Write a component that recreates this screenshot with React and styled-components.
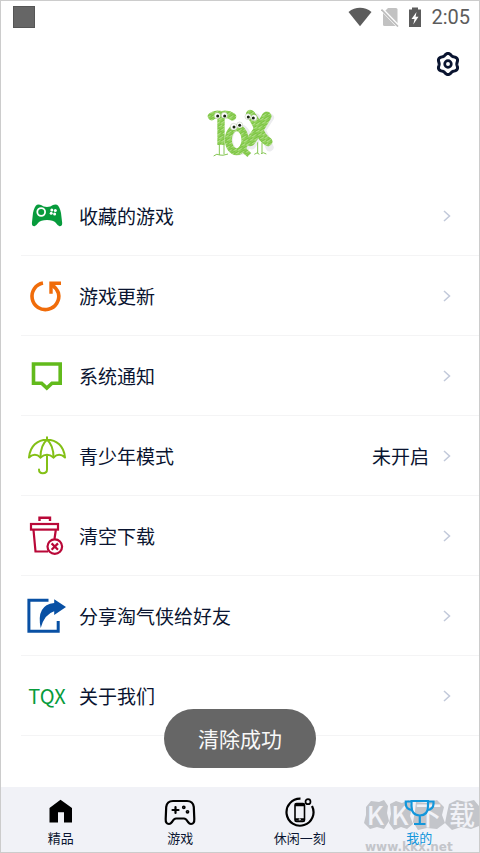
import React from "react";
import styled, { createGlobalStyle } from "styled-components";

const GlobalStyle = createGlobalStyle`
  * {
    box-sizing: border-box;
  }
  body {
    margin: 0;
    background: #ffffff;
    font-family: "Noto Sans CJK SC", "Noto Sans", sans-serif;
    color: #0a1430;
  }
`;

const Page = styled.div`
  display: flex;
  flex-direction: column;
  min-height: 100vh;
  border: 1px solid #cccccc;
  background: #ffffff;
`;

// Status bar
const StatusBar = styled.div`
  display: flex;
  align-items: center;
  justify-content: space-between;
  height: 32px;
  padding: 0 9px 0 12px;
  color: #5c5c5c;
`;
const AppSquare = styled.div`
  width: 22px;
  height: 22px;
  background: #666666;
  border: 1px solid #555555;
`;
const StatusIcons = styled.div`
  display: flex;
  align-items: center;
  gap: 9px;
`;
const Clock = styled.span`
  font-family: Roboto, sans-serif;
  font-size: 20px;
  line-height: 24px;
`;

const Toolbar = styled.header`
  display: flex;
  justify-content: flex-end;
  padding: 19px 19px 4px;
`;
const IconButton = styled.button`
  display: flex;
  padding: 0;
  border: none;
  background: none;
  color: #0a1430;
  cursor: pointer;
`;
const LogoArea = styled.div`
  display: flex;
  justify-content: center;
  padding: 20px 0 11px;
`;

// Menu
const Menu = styled.main`
  display: flex;
  flex-direction: column;
  padding-left: 20px;
  margin-bottom: 51px;
`;
const MenuRow = styled.button`
  display: flex;
  align-items: center;
  height: 80px;
  padding: 0 28px 0 6px;
  border: none;
  border-bottom: 1px solid #f4f4f5;
  background: none;
  color: inherit;
  font-family: inherit;
  font-size: 19px;
  line-height: 28px;
  text-align: left;
  cursor: pointer;
`;
const IconSlot = styled.span`
  display: flex;
  align-items: center;
  justify-content: center;
  width: 40px;
  height: 40px;
  margin-right: 12px;
  color: ${(props) => props.$color};
`;
const IconText = styled.span`
  font-size: 20px;
`;
const RowLabel = styled.span`
  flex: 1;
`;
const RowValue = styled.span`
  margin-right: 14px;
`;

const Toast = styled.div`
  position: fixed;
  left: 50%;
  bottom: 85px;
  transform: translateX(-50%);
  padding: 14px 34px 15px;
  border-radius: 30px;
  background: #666666;
  color: #f8f8f8;
  font-size: 21px;
  line-height: 30px;
  white-space: nowrap;
`;

// Bottom tabs
const TabBar = styled.nav`
  position: relative;
  display: flex;
  height: 65px;
  margin-top: auto;
  background: #f1f2f7;
`;
const Tab = styled.a`
  position: relative;
  flex: 1;
  display: flex;
  flex-direction: column;
  align-items: center;
  gap: 1px;
  padding-top: 10px;
  color: ${(props) => (props.$active ? "#1296db" : "#000000")};
  text-decoration: none;
`;
const TabLabel = styled.span`
  font-size: 13px;
  line-height: 20px;
  color: ${(props) => (props.$active ? "#1296db" : "#0a1430")};
`;

// Site stamp in the corner, under the last tab
const Stamp = styled.div`
  position: absolute;
  right: 0;
  bottom: 0;
  width: 116px;
  height: 54px;
`;
const StampShape = styled.svg`
  position: absolute;
  left: 0;
  top: 0;
`;
const StampTitle = styled.div`
  position: absolute;
  left: 0;
  top: 0;
  display: grid;
  grid-template-columns: 25px 24px 33px 34px;
  justify-items: center;
  font-size: 26px;
  line-height: 32px;
  font-weight: 500;
  color: #f1f2f7;
`;
const StampUrl = styled.div`
  position: absolute;
  left: 2px;
  bottom: -2px;
  font-family: "DejaVu Sans", sans-serif;
  font-size: 12px;
  line-height: 14px;
  font-weight: bold;
  color: #c3c5ca;
`;

const gearPoints = Array.from({ length: 72 }, (_, i) => {
  const angle = (i * 5 * Math.PI) / 180;
  const radius = 9.7 - 0.9 * Math.cos(6 * angle);
  return `${(12 + radius * Math.cos(angle)).toFixed(2)},${(12 + radius * Math.sin(angle)).toFixed(2)}`;
}).join(" ");

const GearIcon = () => (
  <svg width="24" height="24" viewBox="0 0 24 24" fill="none" stroke="currentColor">
    <polygon points={gearPoints} strokeWidth="3" strokeLinejoin="round" />
    <circle cx="12" cy="12" r="3.300" strokeWidth="2.700" />
  </svg>
);

const WifiIcon = () => (
  <svg width="24" height="20" viewBox="0 0 24 20" fill="currentColor">
    <path d="M.5 5C4 2 8 .8 12 .8S20 2 23.5 5L12 19.2z" />
  </svg>
);

const NoSimIcon = () => (
  <svg width="18" height="20" viewBox="0 0 18 20">
    <path d="M2 6L7 1h8q1.500 0 1.500 1.500V19H3.500Q2 19 2 17.500z" fill="#c2c2c2" />
    <path d="M0 1.500L17.500 19.500" stroke="#ffffff" strokeWidth="3.500" />
    <path d="M.5 2.500L17 19.500" stroke="#bcbcbc" strokeWidth="1.600" />
  </svg>
);

const BatteryIcon = () => (
  <svg width="14" height="20" viewBox="0 0 14 20">
    <path d="M1 2.500h3V.5h6v2h3V20H1z" fill="#5c5c5c" />
    <path d="M8.500 5L3.500 12H6.500L5.300 17.500L10.500 9.800H7.600z" fill="#ffffff" />
  </svg>
);

const ChevronIcon = () => (
  <svg width="8" height="12" viewBox="0 0 8 12" fill="none" stroke="#c2c9da" strokeWidth="1.500">
    <path d="M1 1L6.500 6L1 11" />
  </svg>
);

const TqxLogo = () => (
  <svg width="90" height="65" viewBox="0 0 270 195" role="img" aria-label="TQX">
    <defs>
      <pattern id="crayon" width="29" height="12" patternUnits="userSpaceOnUse" patternTransform="rotate(-32)">
        <rect width="29" height="12" fill="#90d159" />
        <path d="M0 2H20M8 8H29" stroke="#72bd38" strokeWidth="2.500" />
        <path d="M0 5H14M17 11H29" stroke="#d3efba" strokeWidth="1.800" />
      </pattern>
    </defs>
    <g fill="none" stroke="#ececef" strokeLinecap="round" transform="translate(6 4)">
      <path d="M178 48L218 138M219 49L165 132" strokeWidth="24" />
      <ellipse cx="127" cy="115" rx="28" ry="38" strokeWidth="18" />
    </g>
    <g fill="none" stroke="url(#crayon)">
      <path d="M50 49Q62 40 80 45Q98 40 112 50" strokeWidth="23" strokeLinecap="round" />
      <path d="M78 47V135" strokeWidth="22" />
      <ellipse cx="125" cy="119" rx="25" ry="36" strokeWidth="21" />
      <path d="M134 139L163 165" strokeWidth="17" />
      <path d="M166 43Q181 59 191 87T219 125" strokeWidth="27" strokeLinecap="round" />
      <path d="M215 49Q200 77 166 124" strokeWidth="29" strokeLinecap="round" />
    </g>
    <g fill="none" stroke="#85c653" strokeWidth="3">
      <path d="M73 132V165M87 132V163M56 168Q66 159 74 165Q82 168 99 162M188 127V160M201 128V160M178 163Q187 154 193 163M198 161Q205 155 214 162" />
    </g>
    <g fill="#ffffff" stroke="#9cab8d" strokeWidth="1">
      <circle cx="67" cy="47" r="9" />
      <circle cx="88" cy="46" r="9" />
      <circle cx="116" cy="80" r="10" />
      <circle cx="134" cy="75" r="9" />
      <circle cx="159" cy="50" r="9" />
      <circle cx="177" cy="53" r="9" />
    </g>
    <g fill="#17230f">
      <circle cx="68" cy="48" r="4.500" />
      <circle cx="89" cy="48" r="4.500" />
      <circle cx="117" cy="81" r="4.500" />
      <circle cx="134" cy="76" r="4.500" />
      <circle cx="160" cy="51" r="4.500" />
      <circle cx="175" cy="54" r="4.500" />
    </g>
  </svg>
);

const GamepadIcon = () => (
  <svg width="40" height="40" viewBox="0 0 40 40">
    <path d="M10 8.800Q12 8 14 9Q16.500 11 20 11T26 9Q28 8 30 8.800Q32.500 10 34 17L35.200 27Q35.200 30.500 32.500 30.300Q31 30 28.500 26.500Q26.500 24 20 24T11.500 26.500Q9 30 7.500 30.300Q4.800 30.500 4.900 27L6 17Q7.500 10 10 8.800z" fill="currentColor" />
    <circle cx="14.200" cy="16" r="3.900" fill="none" stroke="#ffffff" strokeWidth="1.800" />
    <g fill="#ffffff">
      <circle cx="24.800" cy="14" r="1.500" />
      <circle cx="28.300" cy="14.600" r="1.500" />
      <circle cx="24.200" cy="17.200" r="1.500" />
      <circle cx="27.600" cy="18" r="1.500" />
    </g>
  </svg>
);

const UpdateIcon = () => (
  <svg width="40" height="40" viewBox="0 0 40 40" fill="none" stroke="currentColor">
    <path d="M16 7A13.400 13.400 0 1 0 31.400 17Q29.500 12 25 9" strokeWidth="3.600" />
    <path d="M34 7.300H24V17.800" strokeWidth="3.400" />
  </svg>
);

const NoticeIcon = () => (
  <svg width="40" height="40" viewBox="0 0 40 40" fill="none" stroke="currentColor" strokeWidth="3.600">
    <path d="M6.500 8H33.200V27.200H25L19.800 32L14.600 27.200H6.500z" />
  </svg>
);

const UmbrellaIcon = () => (
  <svg width="40" height="40" viewBox="0 0 40 40" fill="none" stroke="currentColor" strokeWidth="2" strokeLinecap="round" strokeLinejoin="round">
    <path d="M20 1.200V4M2 21.500C3 10 10.500 3.700 20 3.700S37 10 38 21.500Q32 16 26.500 21.500Q20 16 13.500 21.500Q8 16 2 21.500z" />
    <path d="M20 3.700Q13.500 9 13.500 21.500M20 3.700Q26.500 9 26.500 21.500" />
    <path d="M20 20V33.500Q20 37.200 15.800 37.200Q12 37.200 12 33.500" />
  </svg>
);

const TrashIcon = () => (
  <svg width="40" height="40" viewBox="0 0 40 40" fill="none" stroke="currentColor" strokeWidth="2.200">
    <path d="M12.500 5V1.800H23V5" strokeWidth="2.400" />
    <rect x="4" y="8" width="27" height="5.600" />
    <path d="M6.500 14L8.500 35.500H21M28.800 14L27.500 23" />
    <circle cx="27.800" cy="30.600" r="7.300" />
    <path d="M24.600 27.400L31 33.800M31 27.400L24.600 33.800" />
  </svg>
);

const ShareIcon = () => (
  <svg width="40" height="40" viewBox="0 0 40 40">
    <path d="M21.500 4.200H1.900V35.200H31.200V25" fill="none" stroke="currentColor" strokeWidth="3" />
    <path d="M27.200 3.200L39 11L27.200 19V15.200Q17.500 18 13.700 32Q9 9 27.200 7z" fill="currentColor" />
  </svg>
);

const HomeIcon = () => (
  <svg width="30" height="30" viewBox="0 0 30 30" fill="currentColor">
    <path d="M14.500 2.800L26 11V25.600H18V15.300H12V25.600H3.500V11z" />
  </svg>
);

const GamesIcon = () => (
  <svg width="32" height="30" viewBox="0 0 32 30" fill="none" stroke="currentColor" strokeWidth="2.200" strokeLinejoin="round" strokeLinecap="round">
    <path d="M9 4H23Q29 4 29.800 10L30.300 22Q30.500 27 27 27Q25.500 27 24 25Q22 21.500 20 21.500H12Q10 21.500 8 25Q6.500 27 5 27Q1.500 27 1.700 22L2.200 10Q3 4 9 4z" />
    <path d="M11.500 10V16M8.500 13H14.500" />
    <circle cx="19.800" cy="10.300" r="0.800" />
    <circle cx="23.500" cy="14.800" r="0.800" />
  </svg>
);

const RelaxIcon = () => (
  <svg width="30" height="30" viewBox="0 0 30 30" fill="none" stroke="currentColor">
    <path d="M15.500 1.700A13.500 13.500 0 1 0 27 9" strokeWidth="2.200" />
    <circle cx="23" cy="4.700" r="2.500" strokeWidth="1.700" />
    <rect x="10" y="6.500" width="9.500" height="18" rx="1.500" strokeWidth="1.600" />
    <path d="M10 8H19.500M10 22.500H19.500" strokeWidth="2.500" />
    <circle cx="14.800" cy="22.400" r="0.600" stroke="#f1f2f7" />
  </svg>
);

const TrophyIcon = () => (
  <svg width="32" height="30" viewBox="0 0 32 30" fill="none" stroke="currentColor" strokeWidth="2.200">
    <path d="M8.500 4H25V9Q25 18.500 16.800 18.500Q8.500 18.500 8.500 9zM16.800 18.500V26.500M11 27H22.500" />
    <path d="M8.500 4.500H2.800V7Q3 12.500 9.500 13M25 4.500H30.500V7Q30.300 12.500 24 13" />
  </svg>
);

const menuItems = [
  { label: "收藏的游戏", color: "#079b3c", icon: <GamepadIcon /> },
  { label: "游戏更新", color: "#f06c0a", icon: <UpdateIcon /> },
  { label: "系统通知", color: "#62ba1c", icon: <NoticeIcon /> },
  { label: "青少年模式", color: "#83c016", icon: <UmbrellaIcon />, value: "未开启" },
  { label: "清空下载", color: "#b90838", icon: <TrashIcon /> },
  { label: "分享淘气侠给好友", color: "#0850a4", icon: <ShareIcon /> },
  { label: "关于我们", color: "#079b3c", icon: <IconText>TQX</IconText> },
];

const tabs = [
  { label: "精品", icon: <HomeIcon /> },
  { label: "游戏", icon: <GamesIcon /> },
  { label: "休闲一刻", icon: <RelaxIcon /> },
  { label: "我的", icon: <TrophyIcon />, active: true },
];

export default () => {
  return (
    <Page>
      <GlobalStyle />
      <StatusBar>
        <AppSquare />
        <StatusIcons>
          <WifiIcon />
          <NoSimIcon />
          <BatteryIcon />
          <Clock>2:05</Clock>
        </StatusIcons>
      </StatusBar>
      <Toolbar>
        <IconButton type="button" aria-label="设置">
          <GearIcon />
        </IconButton>
      </Toolbar>
      <LogoArea>
        <TqxLogo />
      </LogoArea>
      <Menu>
        {menuItems.map((item) => (
          <MenuRow type="button" key={item.label}>
            <IconSlot $color={item.color}>{item.icon}</IconSlot>
            <RowLabel>{item.label}</RowLabel>
            {item.value && <RowValue>{item.value}</RowValue>}
            <ChevronIcon />
          </MenuRow>
        ))}
      </Menu>
      <TabBar>
        <Stamp>
          <StampShape width="116" height="54" viewBox="0 0 116 54" fill="#c3c5ca">
            <path d="M3 9L8 3L16 4L21 2L25 8L24 15L26 23L21 31L14 29L7 31L1 25L3 17z" />
            <path d="M27 6L33 3L39 5L46 2L49 10L47 18L50 26L44 31L38 29L31 32L26 25L28 16z" />
            <path d="M53 4L64 5L74 2L81 9L79 17L82 25L74 31L64 30L55 32L50 24L52 13z" />
            <path d="M86 6L94 2L103 4L111 2L116 8V28L108 31L98 29L89 32L82 25L84 15z" />
          </StampShape>
          <StampTitle>
            <span>K</span>
            <span>K</span>
            <span>下</span>
            <span>载</span>
          </StampTitle>
          <StampUrl>www.kkx.net</StampUrl>
        </Stamp>
        {tabs.map((tab) => (
          <Tab href="#" key={tab.label} $active={tab.active}>
            {tab.icon}
            <TabLabel $active={tab.active}>{tab.label}</TabLabel>
          </Tab>
        ))}
      </TabBar>
      <Toast role="status">清除成功</Toast>
    </Page>
  );
};
